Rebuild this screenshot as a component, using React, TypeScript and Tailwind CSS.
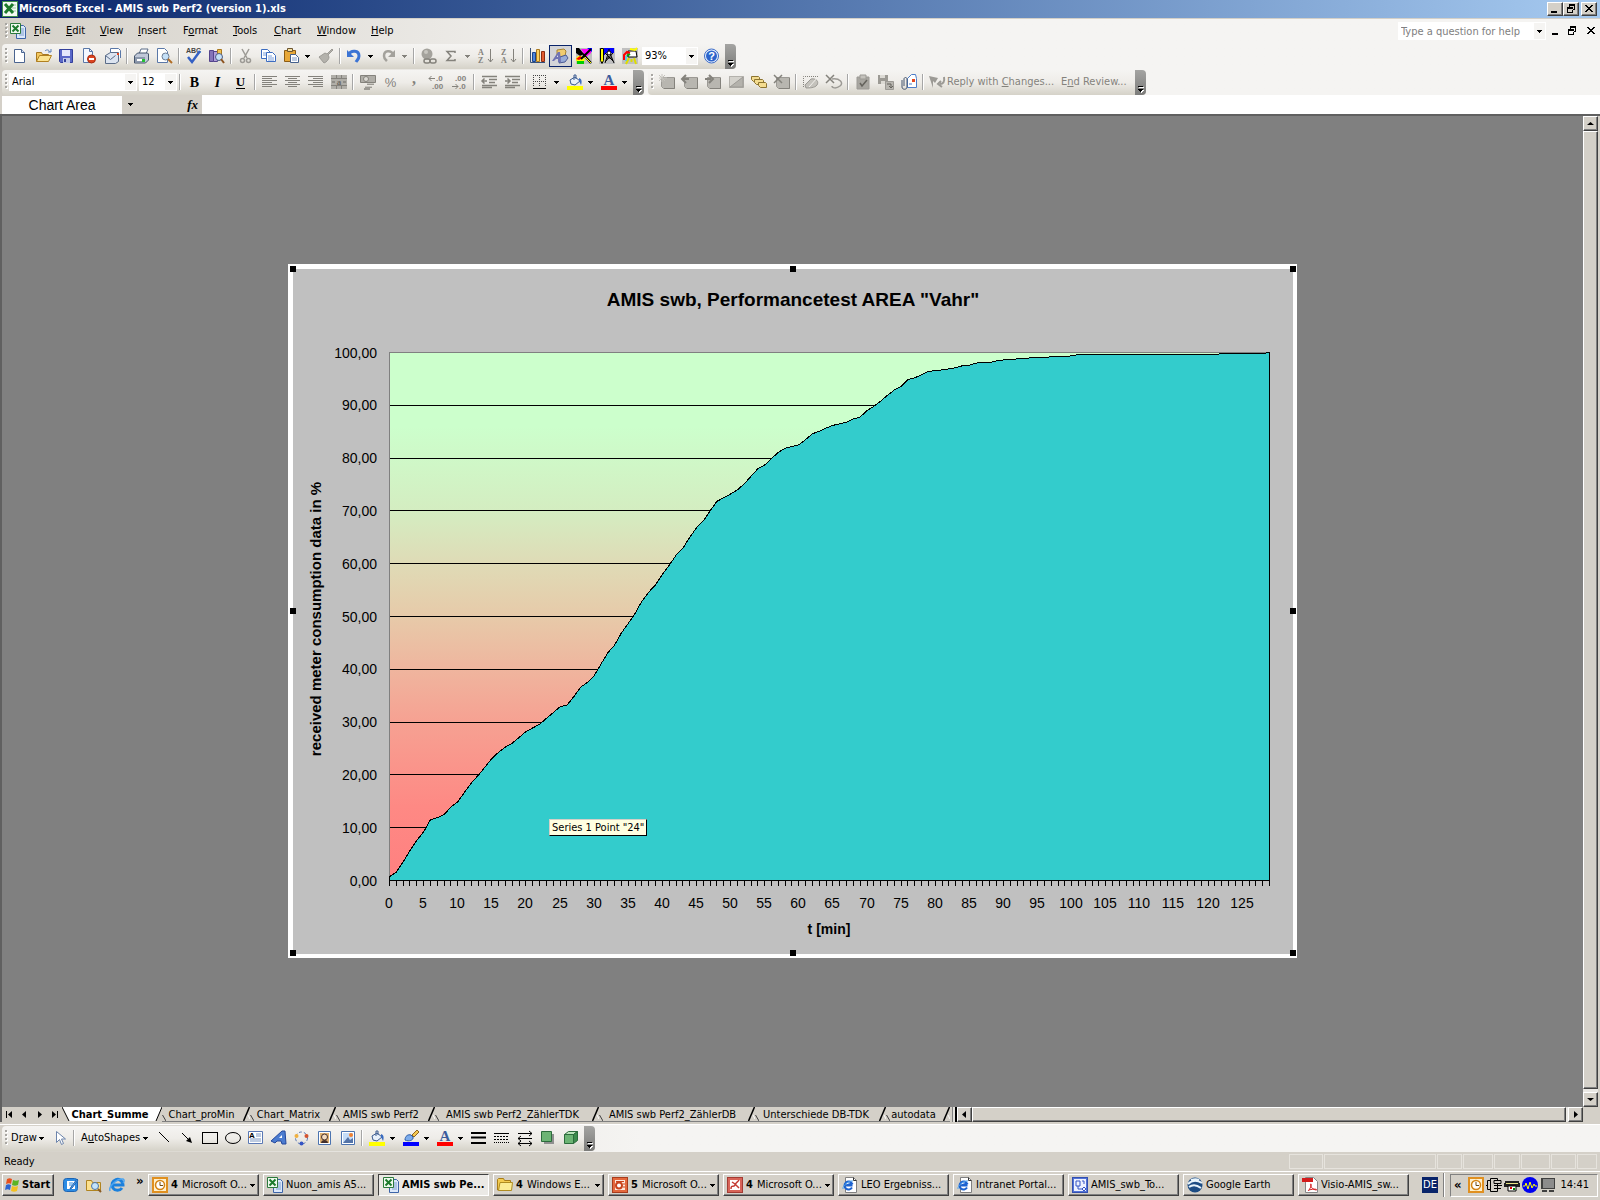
import type { ReactNode } from "react";

// Received meter data in percent, one value per minute
const series = [
  0.7, 1.6, 3.5, 5.7, 7.6, 9.2, 11.5, 11.9, 12.5, 13.9, 14.9, 16.7, 18.5, 19.9, 21.5, 23.1, 24.3, 25.3, 26, 27.1,
  28.2, 28.9, 29.6, 30.7, 31.8, 32.9, 33.2, 34.8, 36.6, 37.5, 38.8, 41, 43.1, 44.6, 46.9, 48.7, 50.6, 52.9, 54.6, 56,
  58, 59.7, 61.6, 62.9, 65, 66.8, 68.1, 70, 71.8, 72.5, 73.2, 74, 75.1, 76.6, 78, 78.7, 79.9, 81.1, 81.9, 82.2,
  82.5, 83.5, 84.6, 85.1, 85.7, 86.2, 86.5, 86.8, 87.4, 87.8, 89, 89.8, 90.8, 91.9, 92.9, 93.6, 94.9, 95.2, 95.8, 96.4,
  96.6, 96.7, 96.9, 97.1, 97.5, 97.6, 98, 98.1, 98.1, 98.4, 98.6, 98.6, 98.8, 98.8, 99, 99, 99, 99.2, 99.2, 99.2,
  99.4, 99.6, 99.6, 99.6, 99.6, 99.6, 99.6, 99.6, 99.6, 99.6, 99.6, 99.6, 99.6, 99.6, 99.6, 99.6, 99.6, 99.6, 99.6, 99.6,
  99.6, 99.6, 99.8, 99.8, 99.8, 99.8, 99.8, 99.8, 99.8, 100,
];

const GRAY = "#9c9a95";

const fillBucket = (
  <>
    <path d="M3 6l5-3 5 4-5 4-4-1z" fill="#e8f0fa" stroke="#3a5a90" />
    <path d="M7 6V1h2v4" fill="none" stroke="#3a5a90" />
    <path d="M12 4c3 1 3 4 2 7l-2-4z" fill="#3a6cc0" />
  </>
);

const excelDoc = (
  <>
    <path d="M6.500 2.500h7l2 2v11h-9z" fill="#dce8fa" stroke="#3c64a8" />
    <path d="M9 6h5M9 8h5M9 10h5M9 12h5" stroke="#7fa0d0" />
    <path d="M0.500 0.500h10v10h-10z" fill="#f0faf0" stroke="#2c7a3c" />
    <path d="M2.500 2.500l6 6M8.500 2.500l-6 6" stroke="#1c7a2c" strokeWidth="2" />
  </>
);

const ieDoc = (
  <>
    <path d="M3.500 0.500h8l3 3v12h-11z" fill="#fff" stroke="#808080" />
    <path d="M11.500 0.500v3h3" fill="none" stroke="#333" />
    <path d="M10 10.500a4 4 0 1 1 0-4L4 8.500h6.500" fill="none" stroke="#1c62d0" strokeWidth="2" />
    <path d="M1 12C0 9 7 3 11 4" fill="none" stroke="#4ca4f0" />
  </>
);

const slide = (
  <>
    <path d="M2.500 3.500h13v11h-11l-2-2z" fill="#b8b6b0" stroke={GRAY} />
    <path d="M5 14.500h10.500V4" fill="none" stroke="#84827c" />
  </>
);

const icons: Record<string, ReactNode> = {
  excel: (
    <>
      <rect x="0.500" y="0.500" width="15" height="15" fill="#f4faf4" stroke="#3c8c4c" />
      <path d="M10 4h4M10 7h4M10 10h4" stroke="#9cc8a4" />
      <path d="M3 3l8 9M11 3l-8 9" stroke="#1c7a2c" strokeWidth="3" />
    </>
  ),
  excelDoc,
  new: (
    <>
      <path d="M1.500 1.500h7l3 3v10h-10z" fill="#fff" stroke="#4a6490" />
      <path d="M8.500 1.500v3h3" fill="#d4e0f4" stroke="#4a6490" />
    </>
  ),
  open: (
    <>
      <path d="M0.500 13.500v-9h5l1 2h6v2" fill="#f4c860" stroke="#a87820" />
      <path d="M0.500 13.500l3-6h12l-3 6z" fill="#fce490" stroke="#b08020" />
      <path d="M9 3c2-2 4-1 5 1m1-3v3h-3" fill="none" stroke="#5a80b8" />
    </>
  ),
  save: (
    <>
      <path d="M0.500 1.500h13v13h-12l-1-1z" fill="#5a68c8" stroke="#34409c" />
      <path d="M3 2h8v6H3z" fill="#e4e8fc" />
      <path d="M4 10h7v5H4z" fill="#c4cce8" />
      <path d="M5 11h2v3H5z" fill="#34409c" />
    </>
  ),
  permission: (
    <>
      <path d="M1.500 0.500h6l3 3v11h-9z" fill="#f4f8ff" stroke="#5a78a8" />
      <path d="M7.500 0.500v3h3" fill="none" stroke="#5a78a8" />
      <circle cx="9.500" cy="11" r="4" fill="#dc4420" stroke="#a82c10" />
      <path d="M7 11h5" stroke="#fff" strokeWidth="2" />
    </>
  ),
  mail: (
    <>
      <path d="M5.500 7V0.500h8l2 2V10" fill="#fff" stroke="#5a78a8" />
      <path d="M0.500 7.500l5-3h8v9l-3 2h-10z" fill="#dce4f0" stroke="#5a6c88" />
      <path d="M0.500 7.500l5 4 5-4" fill="none" stroke="#5a6c88" />
      <path d="M12 5h2v2h-2z" fill="#e44820" />
    </>
  ),
  print: (
    <>
      <path d="M5 6l2-5h7l-2 5" fill="#fff" stroke="#5a6c88" />
      <path d="M0.500 8l3-3h10l1 1v6l-3 3h-11z" fill="#c0c8d8" stroke="#44546c" />
      <path d="M1 9h10v5H1z" fill="#8c98ac" />
      <path d="M3 11h5v2H3z" fill="#fff" />
      <path d="M8 11h3v3H8z" fill="#24c034" />
    </>
  ),
  preview: (
    <>
      <path d="M0.500 0.500h7l3 3v11h-10z" fill="#fff" stroke="#5a78a8" />
      <circle cx="8.500" cy="8.500" r="3.500" fill="#c4e0f8" stroke="#6c7c94" />
      <path d="M11 11l4 4" stroke="#b06c24" strokeWidth="2" />
    </>
  ),
  spelling: (
    <>
      <text x="0" y="5" fontSize="7" fontWeight="bold" fontFamily="Liberation Sans" fill="#444">ABC</text>
      <path d="M2 9l4 5 8-11" fill="none" stroke="#3460c4" strokeWidth="2.500" />
    </>
  ),
  research: (
    <>
      <path d="M0.500 2.500h4v11h-4z" fill="#8474b8" stroke="#54448c" />
      <path d="M4.500 3.500h4v10h-4z" fill="#b4a0dc" stroke="#54448c" />
      <path d="M8.500 1.500h4v9h-4z" fill="#f0c050" stroke="#a87820" />
      <circle cx="10" cy="9" r="3.500" fill="#c4e0f8" stroke="#4c5c84" />
      <path d="M12 11l3 4" stroke="#8c5420" strokeWidth="2" />
    </>
  ),
  cut: (
    <g fill="none" stroke={GRAY} strokeWidth="1.500">
      <path d="M4 1l5 9M11 1L6 10" />
      <circle cx="4.500" cy="12.500" r="2" />
      <circle cx="10.500" cy="12.500" r="2" />
    </g>
  ),
  copy: (
    <g fill="#fff" stroke="#3c6cc0">
      <path d="M0.500 1.500h6l3 3v6h-9z" />
      <path d="M5.500 4.500h6l3 3v6h-9z" />
      <path d="M2 5h3M2 7h3M7 8h4M7 10h6M7 12h6" stroke="#7ca0dc" />
    </g>
  ),
  paste: (
    <>
      <path d="M0.500 2.500h11v11h-11z" fill="#e8a838" stroke="#8c5c14" />
      <path d="M3.500 0.500h5v3h-5z" fill="#f4e0a0" stroke="#6c5430" />
      <path d="M6.500 6.500h5l3 3v5h-8z" fill="#fff" stroke="#44608c" />
      <path d="M8 10h5M8 12h5" stroke="#7c98c4" />
    </>
  ),
  brush: (
    <path d="M14 1l-5 5-2-1-6 4 5 6c3-1 5-4 5-6l-1-2 5-5z" fill="#b4b2ac" stroke={GRAY} />
  ),
  undo: (
    <>
      <path d="M2 6c2-4 10-4 10 2 0 3-2 4-3 6" fill="none" stroke="#3c74d4" strokeWidth="3" />
      <path d="M0 2v7h7z" fill="#3c74d4" />
    </>
  ),
  redo: (
    <>
      <path d="M12 6C10 2 3 2 3 8c0 3 2 4 3 5" fill="none" stroke="#a4a29c" strokeWidth="2.500" />
      <path d="M14 2v7H7z" fill="#a4a29c" />
    </>
  ),
  link: (
    <>
      <circle cx="6" cy="6" r="5.500" fill="#a4a29c" />
      <circle cx="5" cy="4" r="2" fill="#c8c6c0" />
      <rect x="3" y="11" width="6" height="4" rx="2" fill="none" stroke="#84827c" strokeWidth="1.500" />
      <rect x="9" y="11" width="6" height="4" rx="2" fill="none" stroke="#84827c" strokeWidth="1.500" />
    </>
  ),
  sum: <path d="M11 5V3.500H3L7 8l-4 4.500h8V11" fill="none" stroke="#84827c" strokeWidth="1.500" />,
  sortAsc: (
    <>
      <text x="0" y="7" fontSize="8" fontWeight="bold" fontFamily="Liberation Serif" fill="#84827c">A</text>
      <text x="0" y="15" fontSize="8" fontWeight="bold" fontFamily="Liberation Serif" fill="#84827c">Z</text>
      <path d="M12.500 1v13M10 11l2.500 3 2.500-3" fill="none" stroke="#84827c" />
    </>
  ),
  sortDesc: (
    <>
      <text x="0" y="7" fontSize="8" fontWeight="bold" fontFamily="Liberation Serif" fill="#84827c">Z</text>
      <text x="0" y="15" fontSize="8" fontWeight="bold" fontFamily="Liberation Serif" fill="#84827c">A</text>
      <path d="M12.500 1v13M10 11l2.500 3 2.500-3" fill="none" stroke="#84827c" />
    </>
  ),
  chart: (
    <>
      <path d="M0.500 0v14.500H15" fill="none" stroke="#34507c" />
      <path d="M2.500 4.500h3v9h-3z" fill="#4c84dc" stroke="#1c448c" />
      <path d="M6.500 1.500h3v12h-3z" fill="#fcd060" stroke="#a87820" />
      <path d="M11.500 3.500h3v10h-3z" fill="#e45c30" stroke="#8c2c10" />
    </>
  ),
  drawing: (
    <>
      <path d="M5 2l7-1 2 2-1 5-8 1z" fill="#f0cc70" stroke="#a88430" />
      <path d="M8 9l6-2 2 3-3 4-6 1z" fill="#98acd8" stroke="#4c5c94" />
      <path d="M0 13L6 4h2l1 10H6v-3H4l-2 2z" fill="#7074b4" />
      <path d="M5 9h1V7z" fill="#fff" />
    </>
  ),
  tools1: (
    <>
      <path d="M0 0h16v16H0z" fill="#c0c0c0" />
      <path d="M0 0h3l5 6-4 2-4-3z" fill="#000" />
      <path d="M5 1h10v4l-5 4z" fill="#f0f" />
      <path d="M11 0h5v4z" fill="#00f" />
      <path d="M0 12c0-6 8-5 9 0l-3 4H2z" fill="#ff0" />
      <path d="M0 11l4-3 3 2-4 2z" fill="#f00" />
      <path d="M1 13h7v3H1z" fill="#0c0" />
      <path d="M15 1L5 11M7 6l8 9" stroke="#000" strokeWidth="2" />
      <path d="M9 9l6 6" stroke="#ff0" />
    </>
  ),
  tools2: (
    <>
      <path d="M0 0h16v16H0z" fill="#c0c0c0" />
      <path d="M5 0h10v7H5z" fill="#00f" />
      <path d="M1.500 0.500h3v12l-1.500 3-1.500-3z" fill="#ff0" stroke="#000" />
      <path d="M6 5h9v11H6z" fill="#c0c0c0" />
      <path d="M10 1v3M6 15l4-12 5 12M8 10h5M6 5l8 8M14 5l-8 9" fill="none" stroke="#000" />
      <circle cx="10" cy="5" r="2" fill="#fff" stroke="#000" />
    </>
  ),
  tools3: (
    <>
      <path d="M0 0h16v16H0z" fill="#c0c0c0" />
      <path d="M6 3h8l1 6H6z" fill="#fff" stroke="#000" />
      <path d="M7 10l-3 6M12 10l2 6M9.500 11v3" stroke="#dd0" strokeWidth="2" />
      <path d="M2 12V7l3-3 3 1" fill="none" stroke="#f00" strokeWidth="2" />
      <path d="M5 8l3-2" stroke="#0a0" strokeWidth="2" />
      <path d="M4 13V8" fill="none" stroke="#0cf" />
      <path d="M8 1l5 1 2-2" fill="none" stroke="#ff0" strokeWidth="2" />
    </>
  ),
  help: (
    <>
      <circle cx="7.500" cy="8" r="7" fill="#e8f0fc" stroke="#3c6cc8" />
      <circle cx="7.500" cy="8" r="5.500" fill="#2c64cc" />
      <text x="7.500" y="12" textAnchor="middle" fontSize="11" fontWeight="bold" fontFamily="Liberation Sans" fill="#fff">?</text>
    </>
  ),
  bold: <text x="7.500" y="13" textAnchor="middle" fontSize="14" fontWeight="bold" fontFamily="Liberation Serif">B</text>,
  italic: (
    <text x="7.500" y="13" textAnchor="middle" fontSize="14" fontWeight="bold" fontStyle="italic" fontFamily="Liberation Serif">I</text>
  ),
  underline: (
    <>
      <text x="7.500" y="12" textAnchor="middle" fontSize="13" fontWeight="bold" fontFamily="Liberation Serif">U</text>
      <path d="M3 14.500h9" stroke="#000" />
    </>
  ),
  alignLeft: <path d="M0 2.500h15M0 4.500h10M0 6.500h15M0 8.500h10M0 10.500h15M0 12.500h10" stroke="#84827c" />,
  alignCenter: <path d="M0 2.500h15M3 4.500h9M0 6.500h15M3 8.500h9M0 10.500h15M3 12.500h9" stroke="#84827c" />,
  alignRight: <path d="M0 2.500h15M5 4.500h10M0 6.500h15M5 8.500h10M0 10.500h15M5 12.500h10" stroke="#84827c" />,
  merge: (
    <>
      <path d="M0 1h16v14H0z" fill="#b0aea8" />
      <path d="M0 4.500h16M0 11.500h16M5.500 1v3M10.500 1v3M5.500 12v3M10.500 12v3" stroke="#84827c" />
      <text x="8" y="11" textAnchor="middle" fontSize="9" fontWeight="bold" fontFamily="Liberation Serif" fill="#6c6a64">a</text>
      <path d="M1 8h3M12 8h3" stroke="#6c6a64" />
    </>
  ),
  currency: (
    <>
      <path d="M0.500 1.500h15v7h-15z" fill="#b0aea8" stroke="#84827c" />
      <circle cx="6" cy="5" r="2.500" fill="#dcdad4" stroke="#84827c" />
      <path d="M7 9h7v2H7zM5 12h7v2H5zM4 14h6v2H4z" fill="#9c9a94" />
      <path d="M7 9.500h7M5 12.500h7" stroke="#c8c6c0" />
    </>
  ),
  percent: (
    <text x="7.500" y="13" textAnchor="middle" fontSize="13" fontFamily="Liberation Sans" fill="#84827c">%</text>
  ),
  comma: (
    <text x="8" y="10" textAnchor="middle" fontSize="16" fontWeight="bold" fontFamily="Liberation Serif" fill="#84827c">,</text>
  ),
  incDecimal: (
    <g fill="#84827c" fontSize="8" fontWeight="bold" fontFamily="Liberation Sans">
      <text x="7" y="7">.0</text>
      <text x="3" y="15">.00</text>
      <path d="M0 4.500h6M2.500 2L0 4.500 2.500 7" fill="none" stroke="#84827c" />
    </g>
  ),
  decDecimal: (
    <g fill="#84827c" fontSize="8" fontWeight="bold" fontFamily="Liberation Sans">
      <text x="3" y="7">.00</text>
      <text x="7" y="15">.0</text>
      <path d="M0 12.500h6M3.500 10L6 12.500 3.500 15" fill="none" stroke="#84827c" />
    </g>
  ),
  outdent: (
    <path d="M1 2.500h15M8 5.500h8M8 8.500h6M1 11.500h15M1 13.500h10M6 7H1M3.500 4.500L1 7l2.500 2.500" fill="none" stroke="#84827c" strokeWidth="1.500" />
  ),
  indent: (
    <path d="M1 2.500h15M8 5.500h8M8 8.500h6M1 11.500h15M1 13.500h10M1 7h5M3.500 4.500L6 7 3.500 9.500" fill="none" stroke="#84827c" strokeWidth="1.500" />
  ),
  borders: (
    <>
      <path d="M0.500 1v12M6.500 1v12M12.500 1v12M0 1.500h13M0 7.500h13" stroke="#444" strokeDasharray="1 1" />
      <path d="M0 14.500h13" stroke="#000" />
    </>
  ),
  fill: (
    <>
      {fillBucket}
      <path d="M0 12h16v4H0z" fill="#ff0" />
    </>
  ),
  fontColor: (
    <>
      <text x="8" y="11" textAnchor="middle" fontSize="15" fontWeight="bold" fontFamily="Liberation Serif" fill="#3c5c9c">A</text>
      <path d="M0 12h16v4H0z" fill="#f00" />
    </>
  ),
  lineColor: (
    <>
      <path d="M2 10c0-4 3-6 6-5l2 2c1 3-4 5-8 3z" fill="#7cacec" stroke="#2c5ca8" />
      <path d="M9 5l5-5 2 2-5 5z" fill="#f4c850" stroke="#8c6420" />
      <path d="M0 12h16v4H0z" fill="#00f" />
    </>
  ),
  comment: (
    <>
      {slide}
      <path d="M0 1l6 6M6 1L0 7M3 0v8M0 4h8" stroke="#c4c2bc" />
    </>
  ),
  prevComment: (
    <>
      {slide}
      <path d="M7 5H1M4 1L0 5l4 4" fill="none" stroke="#84827c" strokeWidth="2" />
    </>
  ),
  nextComment: (
    <>
      {slide}
      <path d="M0 5h6M4 1l4 4-4 4" fill="none" stroke="#84827c" strokeWidth="2" />
    </>
  ),
  showComment: (
    <>
      <path d="M1.500 2.500h14v11h-14z" fill="#d4d2cc" stroke="#84827c" strokeDasharray="1 1" />
      <path d="M2 13L15 3v10z" fill="#b4b2ac" stroke={GRAY} />
    </>
  ),
  allComments: (
    <g fill="#f4dc90" stroke="#8c7430">
      <path d="M0.500 2.500h7l1 1v4h-6l-2-2z" />
      <path d="M3.500 5.500h8l1 1v4h-7l-2-2z" />
      <path d="M7.500 8.500h7l1 1v4h-6l-2-2z" />
    </g>
  ),
  deleteComment: (
    <>
      {slide}
      <path d="M0 1l8 8M8 1L0 9" stroke="#84827c" strokeWidth="1.500" />
    </>
  ),
  ink: (
    <>
      <path d="M0.500 13V2.500H15" fill="none" stroke="#84827c" strokeDasharray="1 1" />
      <path d="M2 11l6-6c6-1 8 3 6 6s-8 3-11 3z" fill="#c4c2bc" stroke={GRAY} />
      <path d="M15 3l-9 10" stroke="#f4f2ee" />
    </>
  ),
  deleteInk: (
    <>
      <path d="M6 5c8-1 12 4 8 7s-8 2-8 0" fill="none" stroke={GRAY} strokeWidth="1.500" />
      <path d="M0 1l8 8M8 1L0 9" stroke="#84827c" strokeWidth="1.500" />
    </>
  ),
  task: (
    <>
      <path d="M2 3h12v12H2z" fill="#a8a6a0" stroke={GRAY} />
      <path d="M5 1h6v4H5z" fill="#c4c2bc" stroke={GRAY} />
      <path d="M5 9l2 3 5-6" fill="none" stroke="#64625c" strokeWidth="1.500" />
    </>
  ),
  saveVersion: (
    <>
      <path d="M0 1h10v9H0z" fill="#9c9a94" />
      <path d="M2 1h5v3H2zM3 7h4v3H3z" fill="#dcdad4" />
      <path d="M7.500 7.500h8v8h-8z" fill="#b8b6b0" stroke={GRAY} />
      <path d="M9 10h4v4M11 12l2 2 2-2" fill="none" stroke="#64625c" />
    </>
  ),
  attach: (
    <>
      <path d="M6.500 4.500l4-4h4l1 4v9h-9z" fill="#fff" stroke="#4c7cc8" />
      <path d="M11 5h3v3h-3z" fill="#e44820" />
      <path d="M8 10h3" stroke="#4c7cc8" />
      <path d="M1 6v7c0 3 5 3 5 0V5c0-2-3-2-3 0v7" fill="none" stroke="#44546c" />
    </>
  ),
  reply: (
    <>
      <path d="M0 2l9 2-3 5-2-2v7z" fill={GRAY} />
      <path d="M15 3c1 5-1 7-4 7M12 7l-3 3 4 3" fill="none" stroke={GRAY} strokeWidth="2" />
    </>
  ),
  cursor: <path d="M4.500 1.500v11l3-3 2 5 2-1-2-4.500h4z" fill="#fff" stroke="#6c84ac" />,
  line: <path d="M3 2l10 10" stroke="#000" />,
  arrow: (
    <>
      <path d="M3 3l8 8" stroke="#000" />
      <path d="M13 13l-6-2 4-4z" fill="#000" />
    </>
  ),
  rect: <path d="M0.500 2.500h15v11h-15z" fill="none" stroke="#000" shapeRendering="crispEdges" />,
  oval: <ellipse cx="8" cy="8" rx="7.500" ry="5.500" fill="none" stroke="#000" />,
  textbox: (
    <>
      <path d="M0.500 1.500h14v12h-14z" fill="#fff" stroke="#5a78b4" />
      <path d="M2 9h11M2 11h11M8 4h5M8 6h5" stroke="#7c98c4" />
      <text x="1" y="8" fontSize="8" fontWeight="bold" fontFamily="Liberation Sans">A</text>
    </>
  ),
  wordart: (
    <>
      <path d="M0 11L11 1h3l1 13h-4l-1-3H6l-2 2z" fill="#4c7cd0" stroke="#24489c" />
      <path d="M8 8l3-3v3z" fill="#fff" />
    </>
  ),
  diagram: (
    <>
      <circle cx="7.500" cy="8" r="6" fill="none" stroke="#5a78b4" strokeDasharray="3 2" />
      <circle cx="2.500" cy="6" r="2" fill="#f0b040" />
      <circle cx="12.500" cy="6" r="2" fill="#d45430" />
      <circle cx="7.500" cy="13.500" r="2" fill="#3454c4" />
    </>
  ),
  clip: (
    <>
      <path d="M1.500 1.500h12v13h-12z" fill="#fff" stroke="#4c74b0" />
      <path d="M3 3h9v10H3z" fill="#e0b070" />
      <circle cx="7.500" cy="7" r="3" fill="#f4dcc0" stroke="#44302c" />
      <path d="M4 13c0-4 7-4 7 0z" fill="#44302c" />
    </>
  ),
  picture: (
    <>
      <path d="M1.500 1.500h13v13h-13z" fill="#fff" stroke="#4c74b0" />
      <path d="M3 3h10v10H3z" fill="#c4dcf8" />
      <path d="M3 13l5-6 2 3 3-2v5z" fill="#5474a8" />
      <circle cx="11" cy="5" r="2" fill="#f08030" />
    </>
  ),
  lineStyle: <path d="M0 3h15M0 7.500h15M0 13h15" stroke="#000" strokeWidth="2" />,
  dashStyle: (
    <>
      <path d="M0 3.500h15" stroke="#000" />
      <path d="M0 6.500h15M0 9.500h15" stroke="#000" strokeDasharray="2 1" />
      <path d="M0 12.500h15" stroke="#000" strokeDasharray="1 1" />
    </>
  ),
  arrowStyle: (
    <path d="M1 3.500h14M12 1l3 2.500L12 6M15 8.500H1M4 6L1 8.500 4 11M1 13.500h14M4 11l-3 2.500L4 16M12 11l3 2.500-3 2.500" fill="none" stroke="#000" />
  ),
  shadow: (
    <>
      <path d="M4 4h10v10H4z" fill="#909090" />
      <path d="M1.500 1.500h10v10h-10z" fill="#6cb474" stroke="#2c6c3c" />
    </>
  ),
  cube: (
    <g stroke="#2c6c3c">
      <path d="M1.500 4.500h9v9h-9z" fill="#6cb474" />
      <path d="M1.500 4.500l4-3h9l-4 3z" fill="#bce4bc" />
      <path d="M10.500 4.500l4-3v9l-4 3z" fill="#3c8c4c" />
    </g>
  ),
  windows: (
    <>
      <path d="M3 2c2-1 3-1 5 0L7 7C6 6 4 6 2 7z" fill="#e8501c" />
      <path d="M9 3c2 1 4 1 6 0l-1 5c-2 1-4 1-6 0z" fill="#5cb424" />
      <path d="M2 8c2-1 3-1 5 0l-1 5c-2-1-3-1-5 0z" fill="#2c64d0" />
      <path d="M8 9c2 1 4 1 6 0l-1 5c-2 1-4 1-6 0z" fill="#f4c020" />
    </>
  ),
  desktop: (
    <>
      <rect x="0.500" y="1.500" width="14" height="13" rx="3" fill="#2c8ce4" stroke="#1c64b4" />
      <path d="M4 4h8v8H4z" fill="#fff" />
      <path d="M6 6h4M6 8h3" stroke="#2c8ce4" />
      <path d="M14 2l-6 8-1 2 2-1 6-8z" fill="#5ca4ec" stroke="#1c64b4" />
    </>
  ),
  explorer: (
    <>
      <path d="M0.500 13.500v-10h5l1 2h8v8z" fill="#fce08c" stroke="#b08420" />
      <circle cx="9" cy="9" r="3.500" fill="#c4e4fc" stroke="#4c74a8" />
      <path d="M12 12l3 3" stroke="#8c5c24" strokeWidth="2" />
    </>
  ),
  ie: (
    <>
      <path d="M13 11a5.500 5.500 0 1 1 1-3H4" fill="none" stroke="#1c80dc" strokeWidth="3" />
      <path d="M1 14C-1 10 8 1 14 2c2 1 1 3 0 4" fill="none" stroke="#4ca4f0" strokeWidth="1.500" />
    </>
  ),
  clock: (
    <>
      <rect x="1" y="1" width="14" height="14" fill="#fff0cc" stroke="#e09020" strokeWidth="2" />
      <circle cx="8" cy="8" r="4.500" fill="#fff" stroke="#d48414" strokeWidth="1.500" />
      <path d="M8 5v3.500h3" fill="none" stroke="#6c4c14" />
    </>
  ),
  folder: (
    <>
      <path d="M0.500 13V2.500l1-1h5l1 2h6V13z" fill="#f4cc50" stroke="#a87c18" />
      <path d="M1.500 13.500L3 5.500h12.500l-1 8z" fill="#fcec94" stroke="#b08c20" />
    </>
  ),
  powerpoint: (
    <>
      <rect x="0.500" y="0.500" width="15" height="15" fill="#e4683c" stroke="#a83c1c" />
      <path d="M3 3h10v10H3z" fill="#fce8dc" />
      <circle cx="7" cy="8.500" r="3" fill="#fff" stroke="#c8441c" strokeWidth="2" />
      <path d="M4 4.500h8M11 7h2M11 10h2" stroke="#c8441c" />
    </>
  ),
  photo: (
    <>
      <rect x="0.500" y="0.500" width="15" height="15" fill="#d86458" stroke="#a43c34" />
      <path d="M3 3h10v10H3z" fill="#fff" />
      <path d="M4 12c0-5 3-1 4-4s3-3 4-5M5 5l3 2 4 4" fill="none" stroke="#c43c34" strokeWidth="1.500" />
    </>
  ),
  ieDoc,
  visio: (
    <>
      <rect x="0.500" y="0.500" width="15" height="15" fill="#5474d8" stroke="#3450b0" />
      <path d="M2 2h12v12H2z" fill="#eef2ff" />
      <path d="M4 4h4v5H4zM10 4h2v3M6 9v3h4M10 12l2-2 2 2-2 2z" fill="none" stroke="#3454c4" />
    </>
  ),
  earth: (
    <>
      <circle cx="8" cy="8" r="7.500" fill="#1c4c84" />
      <path d="M1 7c4-4 9-4 14-1M2 10c4-3 8-2 12 1M4 3c3-1 6-1 8 0" fill="none" stroke="#e8f4fc" strokeWidth="2" />
    </>
  ),
  pdf: (
    <>
      <path d="M3.500 0.500h8l4 4v11h-12z" fill="#fff" stroke="#888" />
      <path d="M0 1h11v4H0z" fill="#d41c1c" />
      <path d="M6 14c2-2 4-6 3-7s-1 5 5 6c2 0 0-2-7 0" fill="none" stroke="#d41c1c" />
    </>
  ),
  plug: (
    <g fill="#d4d0c8" stroke="#000">
      <path d="M4.500 1.500h7v13h-7z" />
      <path d="M1.500 3.500h3v9h-3zM0 8.500h2M8 3.500h7v3H8zM8 8.500h8M8 11.500h7" />
    </g>
  ),
  printerTray: (
    <>
      <path d="M1 4h14v2h1v4H0V6h1z" fill="#202020" />
      <path d="M2 6h12v1H2z" fill="#e8e484" />
      <path d="M4 9h8v5H4z" fill="#fff" stroke="#000" />
      <path d="M6 10h2v2H6z" fill="#d00" />
      <path d="M9 11h2v2H9z" fill="#080" />
    </>
  ),
  wave: (
    <>
      <circle cx="8" cy="8" r="8" fill="#0000f0" />
      <path d="M1 9h2l1-3 2 6 2-7 2 6 2-4 1 2h2" fill="none" stroke="#ff0" />
    </>
  ),
  network: (
    <>
      <path d="M1 1h14v11H1z" fill="#404040" />
      <path d="M3 2h11v9H3z" fill="#8c8c8c" />
      <path d="M2 13h5v2H2zM9 13h5v2H9z" fill="#404040" />
    </>
  ),
};

function Icon({ name }: { name: string }) {
  return (
    <svg width="16" height="16" viewBox="0 0 16 16" className="shrink-0 overflow-visible" aria-hidden="true">
      {icons[name]}
    </svg>
  );
}

function Caret() {
  return (
    <svg width="5" height="3" viewBox="0 0 5 3" className="shrink-0" shapeRendering="crispEdges" aria-hidden="true">
      <path d="M0 0h5v1H0zM1 1h3v1H1zM2 2h1v1H2z" fill="currentColor" />
    </svg>
  );
}

function Tool({ name, pressed }: { name: string; pressed?: boolean }) {
  return (
    <button
      type="button"
      aria-label={name}
      className={
        pressed
          ? "flex h-[22px] w-[23px] shrink-0 items-center border border-[#0a246a] bg-[#d4d5d8] pl-0.5"
          : "flex h-[22px] w-[23px] shrink-0 items-center pl-1"
      }
    >
      <Icon name={name} />
    </button>
  );
}

function Drop({ name, muted }: { name: string; muted?: boolean }) {
  return (
    <button
      type="button"
      aria-label={name + " options"}
      className={muted ? "flex h-[22px] w-[11px] shrink-0 items-center pl-0.5 text-[#84827c]" : "flex h-[22px] w-[11px] shrink-0 items-center pl-0.5"}
    >
      <Caret />
    </button>
  );
}

function Sep() {
  return <span className="mr-[3px] ml-0.5 h-4 w-px shrink-0 bg-[#a6a6a6] shadow-[1px_0_0_#fff]" />;
}

function Grip() {
  return (
    <svg width="3" height="16" viewBox="0 0 3 16" className="mr-px ml-[5px] shrink-0" shapeRendering="crispEdges" aria-hidden="true">
      {[0, 4, 8, 12].map((y) => (
        <g key={y}>
          <path d={`M1 ${y + 1}h2v2H1z`} fill="#fff" />
          <path d={`M0 ${y}h2v2H0z`} fill="#a8a6a2" />
        </g>
      ))}
    </svg>
  );
}

function ToolbarEnd() {
  return (
    <button
      type="button"
      aria-label="Toolbar options"
      className="ml-0.5 flex h-[25px] w-[11px] shrink-0 items-end justify-center rounded-r-sm bg-linear-to-b from-[#a4a4a2] to-[#7c7c7a] pb-0.5"
    >
      <svg width="6" height="7" viewBox="0 0 6 7" shapeRendering="crispEdges" aria-hidden="true">
        <path d="M1 1h5v1H1zM1 4h5v1H1zM2 5h3v1H2zM3 6h1v1H3z" fill="#fff" />
        <path d="M0 0h5v1H0zM0 3h5v1H0zM1 4h3v1H1zM2 5h1v1H2z" fill="#000" />
      </svg>
    </button>
  );
}

function Toolbar({ items }: { items: string[] }) {
  return items.map((item, i) => {
    if (item === "|") return <Sep key={i} />;
    if (item.startsWith("v:")) return <Drop key={i} name={item.slice(2)} />;
    if (item.startsWith("x:")) return <Drop key={i} name={item.slice(2)} muted />;
    return <Tool key={i} name={item} pressed={item === "drawing"} />;
  });
}

function Combo({ label, value, width }: { label: string; value: string; width: string }) {
  return (
    <label className={`relative flex h-[18px] shrink-0 items-center bg-white ${width}`}>
      <select aria-label={label} defaultValue={value} className="h-full w-full appearance-none bg-transparent pl-[3px] outline-none">
        <option>{value}</option>
      </select>
      <span className="pointer-events-none absolute top-px right-px bottom-px flex w-[11px] items-center justify-center bg-[#f5f4f2] text-black">
        <Caret />
      </span>
    </label>
  );
}

const band = "flex h-[25px] w-max items-start rounded-sm bg-linear-to-b from-[#f5f4f2] via-[#eeece8] to-[#d5d2c8]";
const bandItems = "mt-px -ml-0.5 flex h-[22px] items-center";
const raised =
  "border border-t-white border-l-white border-r-[#404040] border-b-[#404040] bg-[#d4d0c8] shadow-[inset_-1px_-1px_0_#808080]";

function Glyph({ kind }: { kind: "min" | "restore" | "close" }) {
  return (
    <svg width="10" height="10" viewBox="0 0 10 10" shapeRendering="crispEdges" aria-hidden="true">
      {kind === "min" && <path d="M1 7h6v2H1z" />}
      {kind === "restore" && <path d="M3 0h6v6H6V5h2V2H4v1H3zM1 3h6v6H1zM2 5v3h4V5z" fillRule="evenodd" />}
      {kind === "close" && <path d="M1 1h2v1h1v1h2V2h1V1h2v1H8v1H7v1H6v1h1v1h1v1h1v1H7V7H6V6H4v1H3v1H1V7h1V6h1V5h1V4H3V3H2V2H1z" />}
    </svg>
  );
}

function Triangle({ d }: { d: string }) {
  return (
    <svg width="7" height="7" viewBox="0 0 7 7" aria-hidden="true">
      <path d={d} />
    </svg>
  );
}

const menus: [string, string, string, string][] = [
  ["", "F", "ile", "w-8"],
  ["", "E", "dit", "w-[34px]"],
  ["", "V", "iew", "w-[38px]"],
  ["", "I", "nsert", "w-[45px]"],
  ["F", "o", "rmat", "w-[50px]"],
  ["", "T", "ools", "w-[41px]"],
  ["", "C", "hart", "w-[43px]"],
  ["", "W", "indow", "w-[54px]"],
  ["", "H", "elp", "w-[38px]"],
];

const sheets: [string, string][] = [
  ["Chart_proMin", "w-[88px]"],
  ["Chart_Matrix", "w-[86px]"],
  ["AMIS swb Perf2", "w-[99px]"],
  ["AMIS swb Perf2_ZählerTDK", "w-[164px]"],
  ["AMIS swb Perf2_ZählerDB", "w-[156px]"],
  ["Unterschiede DB-TDK", "w-[131px]"],
  ["autodata", "w-16"],
];

const tasks: { icon: string; count?: string; title: string; active?: boolean }[] = [
  { icon: "clock", count: "4", title: "Microsoft O..." },
  { icon: "excelDoc", title: "Nuon_amis A5..." },
  { icon: "excelDoc", title: "AMIS swb Pe...", active: true },
  { icon: "folder", count: "4", title: "Windows E..." },
  { icon: "powerpoint", count: "5", title: "Microsoft O..." },
  { icon: "photo", count: "4", title: "Microsoft O..." },
  { icon: "ieDoc", title: "LEO Ergebniss..." },
  { icon: "ieDoc", title: "Intranet Portal..." },
  { icon: "visio", title: "AMIS_swb_To..." },
  { icon: "earth", title: "Google Earth" },
  { icon: "pdf", title: "Visio-AMIS_sw..." },
];

const PLOT = { left: 101.5, top: 88.5, width: 880, height: 528 };

function AreaChart() {
  const bottom = PLOT.top + PLOT.height;
  const right = PLOT.left + PLOT.width;
  const x = (i: number) => PLOT.left + (PLOT.width * i) / (series.length - 1);
  const y = (v: number) => bottom - (PLOT.height * v) / 100;
  const line = series.map((v, i) => `${x(i).toFixed(1)},${y(v).toFixed(1)}`).join(" ");

  return (
    <svg width="1009" height="694" viewBox="0 0 1009 694" className="block" fontFamily="Liberation Sans, sans-serif">
      <defs>
        <linearGradient id="plotFill" x1="0" y1="0" x2="0" y2="1">
          <stop offset="0.14" stopColor="#ccffcc" />
          <stop offset="0.3" stopColor="#d4edc1" />
          <stop offset="0.4" stopColor="#dfdbb6" />
          <stop offset="0.5" stopColor="#e7caa9" />
          <stop offset="0.6" stopColor="#efb59e" />
          <stop offset="0.7" stopColor="#f6a192" />
          <stop offset="0.86" stopColor="#fe8984" />
          <stop offset="1" stopColor="#ff8080" />
        </linearGradient>
      </defs>
      <rect width="1009" height="694" fill="#fff" />
      <rect x="5" y="5" width="1000" height="685" fill="#c0c0c0" />
      <text x="505" y="42" textAnchor="middle" fontSize="19" fontWeight="bold">AMIS swb, Performancetest AREA "Vahr"</text>

      <rect x={PLOT.left} y={PLOT.top} width={PLOT.width} height={PLOT.height} fill="url(#plotFill)" stroke="#808080" shapeRendering="crispEdges" />
      {[10, 20, 30, 40, 50, 60, 70, 80, 90].map((v) => (
        <path key={v} d={`M${PLOT.left + 0.5} ${y(v)}H${right}`} stroke="#000" shapeRendering="crispEdges" />
      ))}
      <polygon
        points={`${line} ${right},${bottom} ${PLOT.left},${bottom}`}
        fill="#33cccc"
        stroke="#000"
        shapeRendering="crispEdges"
      />
      {series.map((_, i) => (
        <path key={i} d={`M${x(i)} ${bottom}v5`} stroke="#000" shapeRendering="crispEdges" />
      ))}

      {[0, 10, 20, 30, 40, 50, 60, 70, 80, 90, 100].map((v) => (
        <text key={v} x="89" y={Math.round(y(v)) + 5} textAnchor="end" fontSize="14">{v + ",00"}</text>
      ))}
      {Array.from({ length: 26 }, (_, i) => i * 5).map((m) => (
        <text key={m} x={Math.floor(x(m))} y="644" textAnchor="middle" fontSize="14">{m}</text>
      ))}
      <text x="541" y="670" textAnchor="middle" fontSize="14" fontWeight="bold">t [min]</text>
      <text transform="translate(33 355) rotate(-90)" textAnchor="middle" fontSize="15" fontWeight="bold">
        received meter consumption data in %
      </text>

      {/* selection handles */}
      {[[2, 2], [502, 2], [1002, 2], [2, 344], [1002, 344], [2, 686], [502, 686], [1002, 686]].map(([hx, hy]) => (
        <rect key={`${hx}-${hy}`} x={hx} y={hy} width="6" height="6" fill="#000" />
      ))}
    </svg>
  );
}

export default function App() {
  return (
    <div className="flex h-screen w-full flex-col overflow-hidden bg-[#d4d0c8] font-['DejaVu_Sans_Condensed','Noto_Sans',sans-serif] text-[11px] leading-4 whitespace-nowrap text-black">
      {/* title bar */}
      <header className="flex h-[18px] shrink-0 items-center bg-linear-to-r from-[#0a246a] to-[#a6caf0] pr-[3px] pl-0.5">
        <Icon name="excel" />
        <h1 className="ml-px flex-1 font-bold text-white">Microsoft Excel - AMIS swb Perf2 (version 1).xls</h1>
        <div className="flex">
          <button type="button" aria-label="Minimize" className={`flex h-3.5 w-4 items-center justify-center ${raised}`}>
            <Glyph kind="min" />
          </button>
          <button type="button" aria-label="Restore" className={`mr-0.5 flex h-3.5 w-4 items-center justify-center ${raised}`}>
            <Glyph kind="restore" />
          </button>
          <button type="button" aria-label="Close" className={`flex h-3.5 w-4 items-center justify-center ${raised}`}>
            <Glyph kind="close" />
          </button>
        </div>
      </header>

      <div className="shrink-0 border-t border-[#d4d0c8] bg-linear-to-r from-[#d4d0c8] to-[#f5f4f2] to-40%">
        <nav className="flex h-[25px] items-center pb-px">
          <Grip />
          <span className="flex w-[25px] pl-px">
            <Icon name="excelDoc" />
          </span>
          {menus.map(([before, key, after, width]) => (
            <button key={key + after} type="button" className={`shrink-0 text-left ${width}`}>
              {before}
              <u>{key}</u>
              {after}
            </button>
          ))}
          <label className="relative ml-auto flex h-[18px] w-[148px] items-center bg-white">
            <input
              aria-label="Type a question for help"
              placeholder="Type a question for help"
              className="h-full w-[136px] bg-transparent pl-[3px] outline-none placeholder:text-[#808080]"
            />
            <span className="flex h-4 w-[11px] items-center justify-center bg-[#f5f4f2]">
              <Caret />
            </span>
          </label>
          <div className="flex items-center gap-1.5 pr-1 pl-[5px]">
            <button type="button" aria-label="Minimize workbook">
              <Glyph kind="min" />
            </button>
            <button type="button" aria-label="Restore workbook" className="mr-[3px]">
              <Glyph kind="restore" />
            </button>
            <button type="button" aria-label="Close workbook">
              <Glyph kind="close" />
            </button>
          </div>
        </nav>

        <div className={`ml-0.5 ${band}`}>
          <span className={bandItems}>
            <Grip />
            <Toolbar
              items={[
                "new", "open", "save", "permission", "mail", "|", "print", "preview", "|", "spelling", "research", "|",
                "cut", "copy", "paste", "v:paste", "brush", "|", "undo", "v:undo", "redo", "x:redo", "|",
                "link", "sum", "x:sum", "sortAsc", "sortDesc", "|", "chart", "drawing", "tools1", "tools2", "tools3",
              ]}
            />
            <Combo label="Zoom" value="93%" width="ml-px w-14" />
            <span className="ml-0.5 flex">
              <Tool name="help" />
            </span>
          </span>
          <ToolbarEnd />
        </div>

        <div className="mt-px ml-0.5 flex gap-1">
          <div className={band}>
            <span className={bandItems}>
              <Grip />
              <Combo label="Font" value="Arial" width="mr-0.5 w-32" />
              <Combo label="Font size" value="12" width="w-[38px]" />
              <Toolbar
                items={[
                  "|", "bold", "italic", "underline", "|", "alignLeft", "alignCenter", "alignRight", "merge", "|",
                  "currency", "percent", "comma", "incDecimal", "decDecimal", "|", "outdent", "indent", "|",
                  "borders", "v:borders", "fill", "v:fill", "fontColor", "v:fontColor",
                ]}
              />
            </span>
            <ToolbarEnd />
          </div>
          <div className={band}>
            <span className={bandItems}>
              <Grip />
              <Toolbar
                items={[
                  "comment", "prevComment", "nextComment", "showComment", "allComments", "deleteComment", "|",
                  "ink", "deleteInk", "|", "task", "saveVersion", "attach", "|",
                ]}
              />
              <button type="button" className="flex w-[132px] items-center gap-0.5 pl-[3px] text-[#84827c]">
                <Icon name="reply" />
                <span>
                  Reply with <u>C</u>hanges...
                </span>
              </button>
              <button type="button" className="w-[75px] pl-[3px] text-left text-[#84827c]">
                E<u>n</u>d Review...
              </button>
            </span>
            <ToolbarEnd />
          </div>
        </div>
      </div>

      {/* name box and formula bar */}
      <div className="flex h-[19px] shrink-0 items-center bg-[#d4d0c8] pl-0.5">
        <input
          aria-label="Name Box"
          defaultValue="Chart Area"
          className="h-[18px] w-[120px] bg-white text-center font-['Liberation_Sans',sans-serif] text-[14px] outline-none"
        />
        <button type="button" aria-label="Name list" className="flex w-[17px] justify-center">
          <Caret />
        </button>
        <button type="button" className="w-[63px] pr-1 text-right font-['Liberation_Serif',serif] text-[13px] font-bold italic">
          fx
        </button>
        <input aria-label="Formula Bar" className="h-full min-w-0 flex-1 bg-white outline-none" />
      </div>

      {/* workbook window */}
      <main className="flex min-h-0 flex-1 flex-col border-t-2 border-l-2 border-t-[#606060] border-l-[#606060] pr-0.5">
        <div className="flex min-h-0 flex-1">
          <section className="flex min-w-0 flex-1 items-center justify-center bg-[#808080] pb-px">
            <div className="relative">
              <AreaChart />
              <div className="absolute top-[555px] left-[261px] border border-t-[#d4d0c8] border-r-black border-b-black border-l-[#d4d0c8] bg-[#ffffe1] px-0.5 leading-[15px]">
                Series 1 Point "24"
              </div>
            </div>
          </section>
          <div className="flex w-[15px] flex-col">
            <button type="button" aria-label="Scroll up" className={`flex h-[15px] items-center justify-center ${raised}`}>
              <Triangle d="M0 5h7L3.500 2z" />
            </button>
            <div className={`flex-1 ${raised}`} />
            <div className="h-[3px] bg-[#eae8e4]" />
            <button type="button" aria-label="Scroll down" className={`flex h-[15px] items-center justify-center ${raised}`}>
              <Triangle d="M0 2h7L3.500 5z" />
            </button>
          </div>
        </div>

        <div className="flex h-[15px] shrink-0 pr-[15px]">
          <div className="flex w-[60px] items-center justify-around">
            <button type="button" aria-label="First sheet">
              <Triangle d="M0 0h1v7H0zM6 0v7L2 3.500z" />
            </button>
            <button type="button" aria-label="Previous sheet">
              <Triangle d="M5 0v7L1 3.500z" />
            </button>
            <button type="button" aria-label="Next sheet">
              <Triangle d="M2 0v7l4-3.500z" />
            </button>
            <button type="button" aria-label="Last sheet">
              <Triangle d="M6 0h1v7H6zM1 0v7l4-3.500z" />
            </button>
          </div>
          <div className="flex w-[890px] shrink-0" role="tablist">
            <button type="button" role="tab" aria-selected="true" className="relative w-[100px] shrink-0 pr-1 font-bold">
              <svg width="100" height="15" viewBox="0 0 100 15" className="absolute inset-0" aria-hidden="true">
                <path d="M0 0h100l-6 14H7z" fill="#fff" />
                <path d="M0 0l7 14M100 0l-6 14" stroke="#000" fill="none" />
              </svg>
              <span className="relative">Chart_Summe</span>
            </button>
            <div className="flex">
              {sheets.map(([name, width]) => (
                <button key={name} type="button" role="tab" aria-selected="false" className={`flex shrink-0 border-b border-[#808080] ${width}`}>
                  <svg width="4" height="14" viewBox="0 0 4 14" aria-hidden="true">
                    <path d="M0.500 8L4 14" stroke="#404040" />
                  </svg>
                  <span className="flex-1 pr-1.5 text-center">{name}</span>
                  <svg width="7" height="14" viewBox="0 0 7 14" aria-hidden="true">
                    <path d="M6.500 0L0.500 14" stroke="#000" strokeWidth="1.500" />
                    <path d="M5 8l2 4" stroke="#fff" />
                  </svg>
                </button>
              ))}
            </div>
          </div>
          <div className="w-[5px] shrink-0 border-r-2 border-l border-r-black border-l-[#808080] bg-[#e4e2dc]" />
          <button type="button" aria-label="Scroll left" className={`flex w-[15px] shrink-0 items-center justify-center ${raised}`}>
            <Triangle d="M5 0v7L1 3.500z" />
          </button>
          <div className={`flex-1 ${raised}`} />
          <div className="w-0.5 bg-[#eae8e4]" />
          <button type="button" aria-label="Scroll right" className={`flex w-[15px] shrink-0 items-center justify-center ${raised}`}>
            <Triangle d="M2 0v7l4-3.500z" />
          </button>
        </div>
      </main>

      <div className="mt-0.5 shrink-0 border-t border-white bg-linear-to-r from-[#d4d0c8] to-[#f5f4f2] to-40% pt-px pb-px">
        <div className={`ml-0.5 ${band}`}>
          <span className={bandItems}>
            <Grip />
            <button type="button" className="flex w-[39px] items-center justify-between pr-1 pl-0.5">
              <span>
                D<u>r</u>aw
              </span>
              <Caret />
            </button>
            <Toolbar items={["cursor", "|"]} />
            <button type="button" className="flex w-[75px] items-center justify-between pr-1 pl-1">
              <span>
                A<u>u</u>toShapes
              </span>
              <Caret />
            </button>
            <Toolbar
              items={[
                "line", "arrow", "rect", "oval", "textbox", "wordart", "diagram", "clip", "picture", "|",
                "fill", "v:fill", "lineColor", "v:lineColor", "fontColor", "v:fontColor",
                "lineStyle", "dashStyle", "arrowStyle", "shadow", "cube",
              ]}
            />
          </span>
          <ToolbarEnd />
        </div>
      </div>

      {/* status bar */}
      <footer className="flex h-[19px] shrink-0 items-center pr-[3px] pl-1">
        <span className="flex-1">Ready</span>
        <div className="flex h-[15px] gap-px *:border *:border-[#e6e3dd]">
          <span className="w-[34px]" />
          <span className="w-28" />
          <span className="w-[25px]" />
          <span className="w-[30px]" />
          <span className="w-[26px]" />
          <span className="w-[29px]" />
          <span className="w-[25px]" />
          <span className="w-5" />
        </div>
      </footer>

      {/* task bar */}
      <div className="flex h-[29px] shrink-0 items-center border-t border-white pr-0.5 pb-0.5 pl-0.5">
        <button type="button" className={`mr-[9px] flex h-[22px] w-[52px] shrink-0 items-center gap-0.5 pl-px font-bold ${raised}`}>
          <Icon name="windows" />
          Start
        </button>
        <div className="mr-[9px] flex w-[76px] shrink-0 items-center gap-[7px]">
          <Icon name="desktop" />
          <Icon name="explorer" />
          <Icon name="ie" />
          <span className="-mt-2 ml-1 text-[13px] font-bold">»</span>
        </div>
        <div className="flex min-w-0 flex-1 gap-1">
          {tasks.map((task, i) => (
            <button
              key={i}
              type="button"
              className={
                task.active
                  ? "flex h-[22px] w-[111px] items-center gap-[3px] overflow-hidden border border-t-[#404040] border-r-white border-b-white border-l-[#404040] bg-[#ebe9e5] pl-1 font-bold"
                  : `flex h-[22px] w-[111px] items-center gap-[3px] overflow-hidden pl-[3px] ${raised}`
              }
            >
              <Icon name={task.icon} />
              {task.count && <b className="mr-px">{task.count}</b>}
              <span className="min-w-0 flex-1 overflow-hidden text-left">{task.title}</span>
              {task.count && (
                <span className="mr-[3px] flex">
                  <Caret />
                </span>
              )}
            </button>
          ))}
        </div>
        <span className="mr-[5px] flex h-4 w-4 items-center justify-center bg-[#0a246a] text-white">DE</span>
        <span className="mr-[5px] h-6 w-0.5 border-r border-l border-r-white border-l-[#808080]" />
        <div className="flex h-[23px] w-[148px] items-center border border-t-[#808080] border-r-white border-b-white border-l-[#808080] pl-[3px]">
          <span className="w-3.5 text-[13px] font-bold">«</span>
          <span className="flex gap-0.5">
            <Icon name="clock" />
            <Icon name="plug" />
            <Icon name="printerTray" />
            <Icon name="wave" />
            <Icon name="network" />
          </span>
          <time className="ml-auto pr-2">14:41</time>
        </div>
      </div>
    </div>
  );
}
